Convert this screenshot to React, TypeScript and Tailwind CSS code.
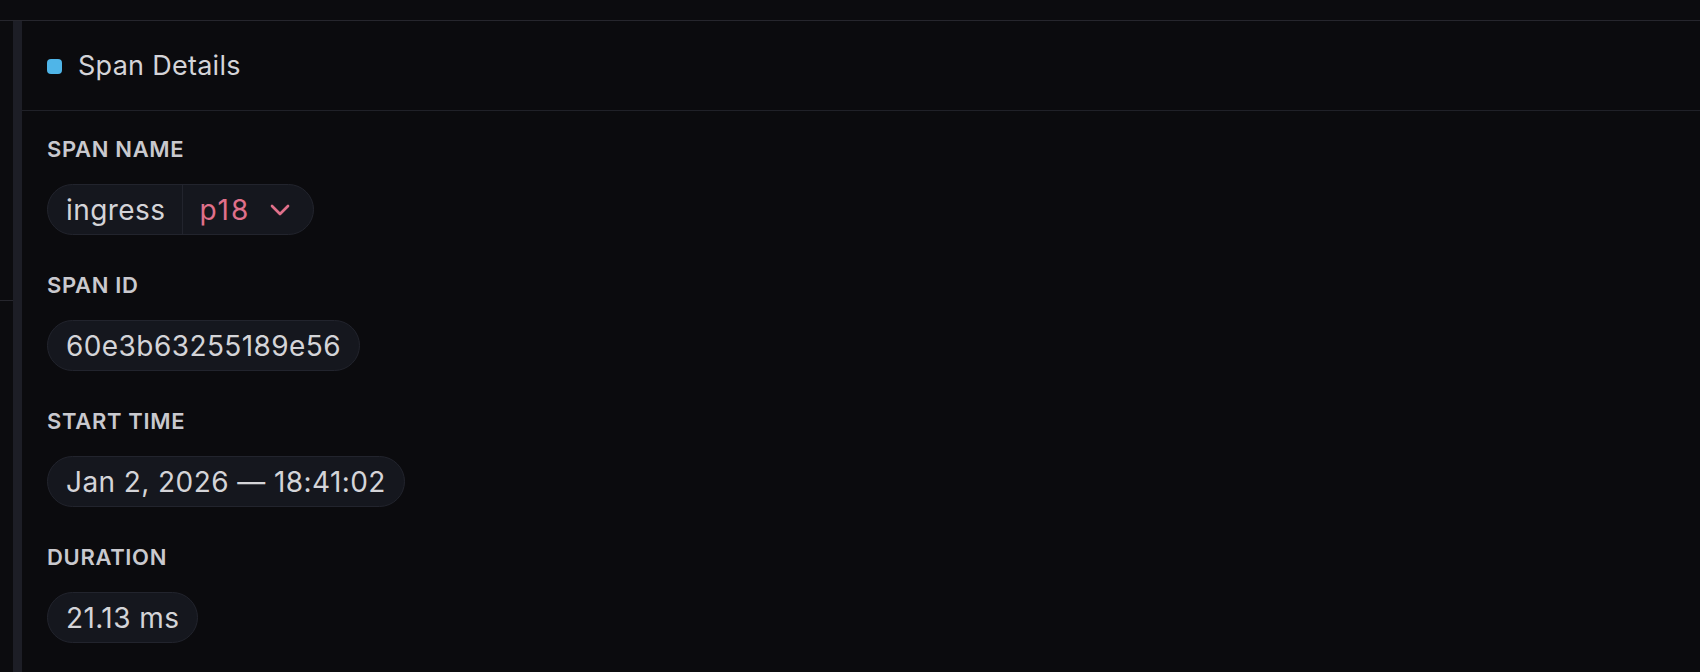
import { ChevronDown } from "lucide-react";

const Field = ({ label, children }: { label: string; children: React.ReactNode }) => {
  return (
    <div className="flex flex-col">
      <div className="text-[22px] leading-[24px] font-semibold tracking-[0.03em] text-[#c9c9ce] uppercase">{label}</div>
      <div className="mt-[23px] flex">{children}</div>
    </div>
  );
};

const Chip = ({ children }: { children: React.ReactNode }) => (
  <div className="flex h-[51px] items-center rounded-full border border-[#22242d] bg-[#15171e] px-[18px] text-[28px] tracking-[0.015em] text-[#d4d4d8]">
    {children}
  </div>
);

export default function App() {
  return (
    <div className="flex h-[672px] w-[1700px] flex-col overflow-hidden bg-[#0c0c0f] font-['Inter',sans-serif]">
      {/* top strip */}
      <div className="h-[21px] shrink-0 border-b border-[#26262d]" />

      <div className="flex flex-1">
        {/* left gutter */}
        <div className="w-[13px] shrink-0">
          <div className="h-[280px] border-b border-[#26262d]" />
        </div>
        <div className="w-[9px] shrink-0 bg-[#1d1e26]" />

        {/* panel */}
        <div className="flex flex-1 flex-col bg-[#0b0b0e]">
          <div className="flex h-[90px] shrink-0 items-center gap-[16px] border-b border-[#202128] pl-[25px]">
            <div className="mt-[2px] h-[15px] w-[15px] rounded-[4px] bg-[#4fb5e8]" />
            <span className="mt-[2px] text-[27px] tracking-[0.01em] text-[#d4d4d8]">Span Details</span>
          </div>

          <div className="flex flex-col gap-[38px] pl-[25px] pt-[26px]">
            <Field label="Span Name">
              <div className="flex h-[51px] items-center rounded-full border border-[#22242d] bg-[#15171e] text-[28px] tracking-[0.015em]">
                <span className="pl-[18px] pr-[17px] text-[#d4d4d8]">ingress</span>
                <div className="h-full w-px bg-[#22242d]" />
                <span className="flex items-center pl-[16px] pr-[17px] text-[#e0708a]">
                  <span className="tracking-[0.07em]">p18</span>
                  <ChevronDown className="ml-[14px] h-[32px] w-[32px]" strokeWidth={2} />
                </span>
              </div>
            </Field>
            <Field label="Span ID">
              <Chip>60e3b63255189e56</Chip>
            </Field>
            <Field label="Start Time">
              <Chip>Jan 2, 2026 — 18:41:02</Chip>
            </Field>
            <Field label="Duration">
              <Chip>21.13 ms</Chip>
            </Field>
          </div>
        </div>
      </div>
    </div>
  );
}
